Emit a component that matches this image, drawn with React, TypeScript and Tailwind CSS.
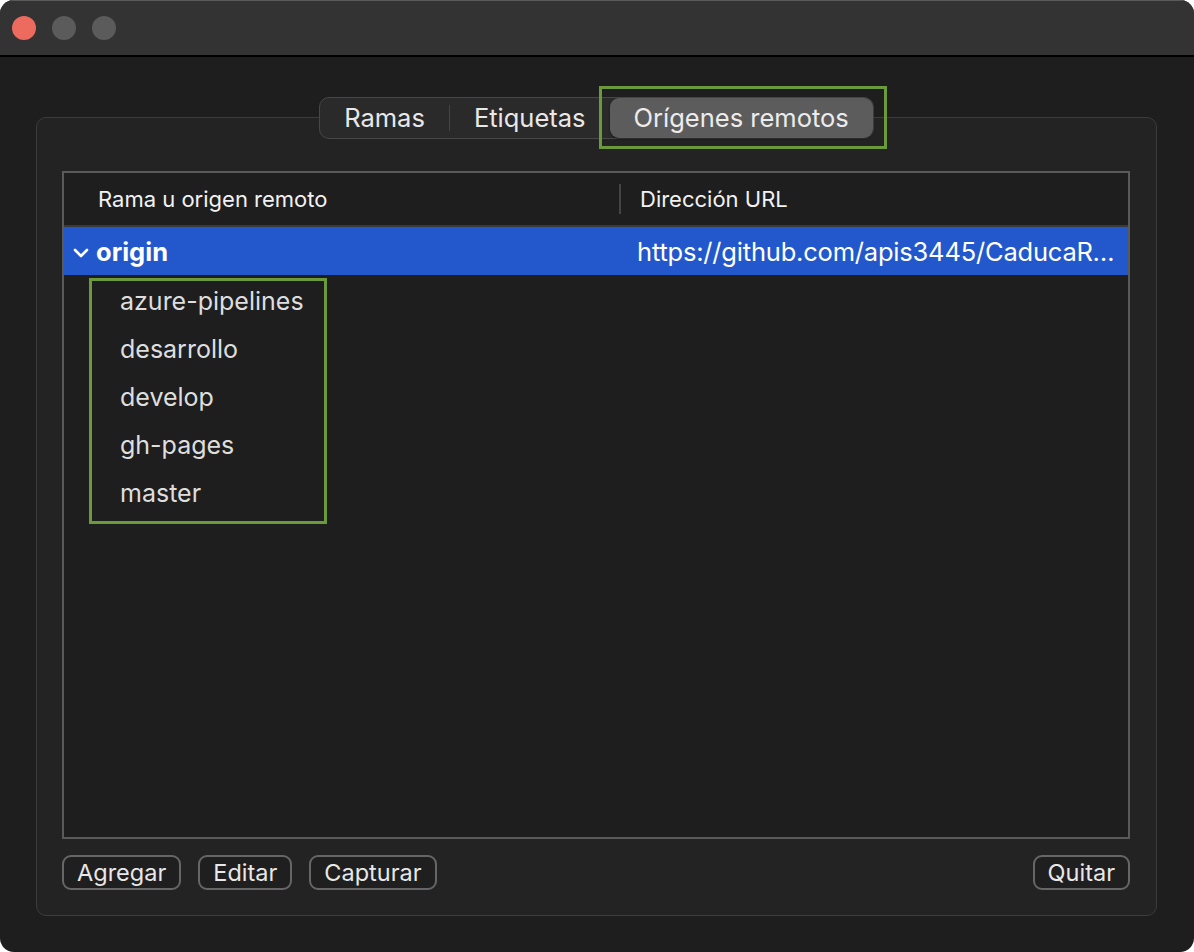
import { useState } from "react";

const ramas = ["azure-pipelines", "desarrollo", "develop", "gh-pages", "master"];

const tabs = ["Ramas", "Etiquetas", "Orígenes remotos"];

const Chevron = () => (
  <svg width="16" height="12" viewBox="0 0 16 12" fill="none">
    <path d="M2 3 L8 9 L14 3" stroke="#ffffff" strokeWidth="2.6" strokeLinecap="round" strokeLinejoin="round" />
  </svg>
);

const Boton = ({ label }: { label: string }) => (
  <button className="h-[35px] rounded-[9px] border-2 border-[#666666] bg-[#1f1f1f] px-[13px] text-[23.5px] leading-none text-[#e8e8e8]">
    {label}
  </button>
);

const App = () => {
  const [tab, setTab] = useState<number>(2);

  return (
    <div className="h-[952px] w-[1194px] bg-white">
      <div className="flex h-full flex-col overflow-hidden rounded-[14px] bg-[#1e1e1e] font-['Inter',sans-serif] text-[#e6e6e6]">
        {/* barra de titulo */}
        <div className="flex h-[57px] shrink-0 items-center gap-[16px] border-b-2 border-black bg-[#333333] pl-[12px] shadow-[inset_0_1px_0_#5a5a5a]">
          <span className="h-[24px] w-[24px] rounded-full bg-[#ec6a5e]" />
          <span className="h-[24px] w-[24px] rounded-full bg-[#5b5b5b]" />
          <span className="h-[24px] w-[24px] rounded-full bg-[#5b5b5b]" />
        </div>

        <div className="flex flex-1 flex-col pb-[36px] pl-[36px] pr-[37px] pt-[40px]">
          <div className="relative z-10 flex justify-center">
            <div className="flex h-[42px] items-center rounded-[10px] border border-[#474747] bg-[#2a2a2a]">
              {tabs.map((t, i) => (
                <div key={t} className="flex items-center">
                  {i === 1 && <span className="h-[26px] w-px bg-[#454545]" />}
                  <button
                    onClick={() => setTab(i)}
                    className={
                      tab === i
                        ? "relative flex h-[40px] items-center rounded-[9px] bg-[#5c5c5c] px-[24px] text-[25.5px] text-[#ececec] shadow-[0_1px_2px_rgba(0,0,0,0.5)]"
                        : "relative flex h-[40px] items-center px-[24px] text-[25.5px] text-[#e8e8e8]"
                    }
                  >
                    {t}
                    {i === 2 && (
                      <span className="pointer-events-none absolute -bottom-[11px] -left-[11px] -right-[14px] -top-[12px] border-[3px] border-[#6a9a3c]" />
                    )}
                  </button>
                </div>
              ))}
            </div>
          </div>

          <div className="-mt-[22px] flex flex-1 flex-col rounded-[10px] border border-[#3c3c3c] bg-[#232323] pb-[25px] pl-[25px] pr-[26px] pt-[53px]">
            <div className="flex flex-1 flex-col border-2 border-[#5a5a5a] bg-[#1e1e1e]">
              <div className="flex h-[54px] shrink-0 items-center border-b-2 border-[#3a3a3a] text-[22px] text-[#f2f2f2]">
                <div className="w-[555px] pl-[34px]">Rama u origen remoto</div>
                <span className="h-[30px] w-[2px] bg-[#444444]" />
                <div className="pl-[19px]">Dirección URL</div>
              </div>

              <div className="flex h-[48px] items-center bg-[#2358cc] pt-[3px] text-[25.5px] text-white">
                <div className="flex w-[557px] items-center gap-[7px] pl-[9px]">
                  <Chevron />
                  <span className="font-bold">origin</span>
                </div>
                <div className="min-w-0 flex-1 truncate pl-[16px] tracking-[-0.2px]">https://github.com/apis3445/CaducaRest.git</div>
              </div>

              <div className="relative">
                {ramas.map((r) => (
                  <div key={r} className="flex h-[48px] items-center pl-[56px] pt-[5px] text-[25px] text-[#dedede]">
                    {r}
                  </div>
                ))}
                <span className="pointer-events-none absolute left-[25px] top-[3px] h-[246px] w-[238px] border-[3px] border-[#6a9a3c]" />
              </div>
            </div>

            <div className="mt-[16px] flex items-center gap-[17px]">
              <Boton label="Agregar" />
              <Boton label="Editar" />
              <Boton label="Capturar" />
              <div className="flex-1" />
              <Boton label="Quitar" />
            </div>
          </div>
        </div>
      </div>
    </div>
  );
};

export default App;
